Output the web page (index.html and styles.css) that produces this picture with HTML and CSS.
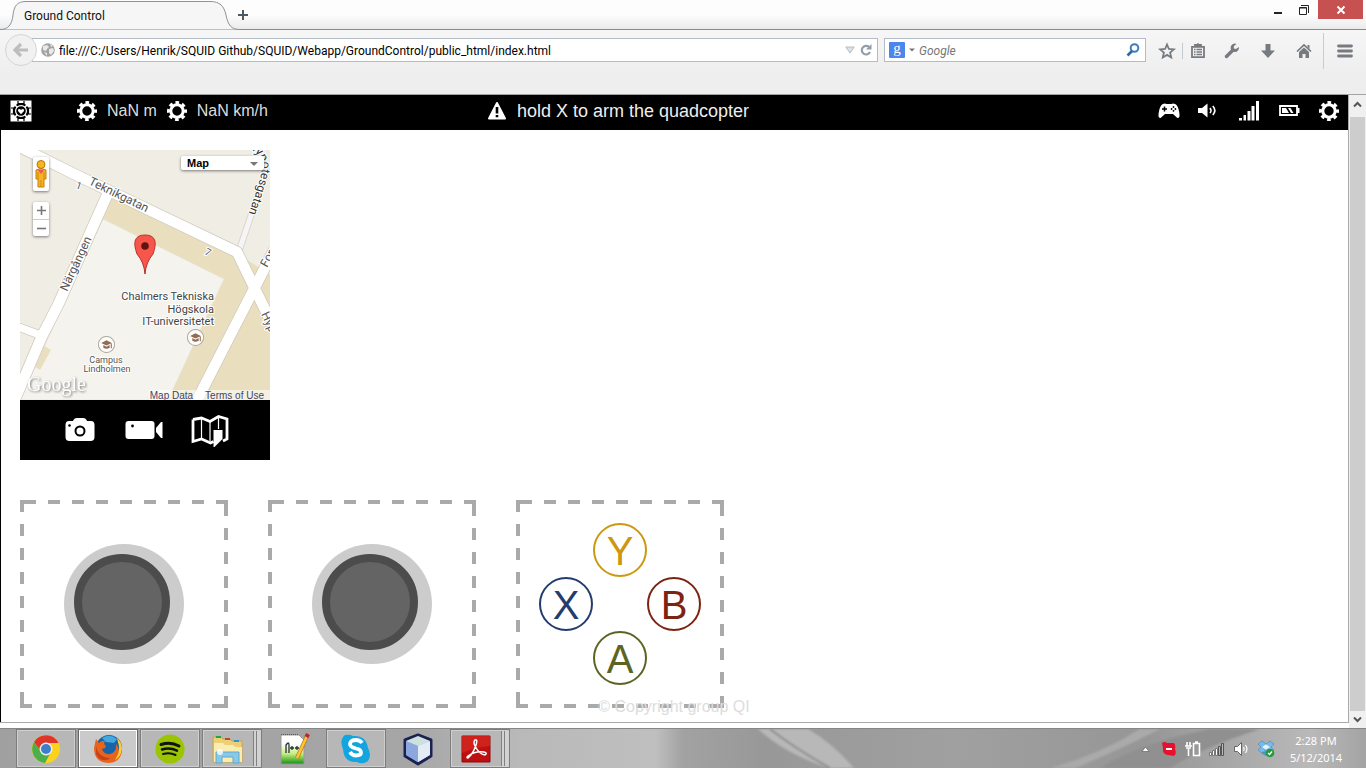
FILE: index.html
```html
<!DOCTYPE html>
<html lang="en">
<head>
<meta charset="utf-8">
<title>Ground Control</title>
<link rel="stylesheet" href="styles.css">
</head>
<body>
<svg class="sprite" aria-hidden="true">
  <symbol id="gear" viewBox="0 0 20 20">
    <circle cx="10" cy="10" r="6.2" fill="none" stroke="currentColor" stroke-width="3"/>
    <circle cx="10" cy="10" r="8.4" fill="none" stroke="currentColor" stroke-width="3.2" stroke-dasharray="3.6 2.997" stroke-dashoffset="1.8"/>
  </symbol>
  <symbol id="cap" viewBox="0 0 16 16">
    <circle cx="8" cy="8" r="7.6" fill="#fff" stroke="#b5aea5"/>
    <path d="M8 4 13 6.500 8 9 3 6.500zM5 8.500v2.500q3 2 6 0V8.500L8 10zM12 7h1v4.500h-1z" fill="#936d51"/>
  </symbol>
</svg>

<header class="titlebar">
  <div class="tab">
    <svg class="tab-shape" viewBox="0 0 240 30" aria-hidden="true">
      <path d="M0 29.500C8 29.500 12 25 13 15 14 6 17 1.500 26 1.500H210C220 1.500 224 6 226 15 228 25 231 29.500 240 29.500" fill="#f6f6f6" stroke="#8b949c"/>
    </svg>
    <span class="tab-title">Ground Control</span>
  </div>
  <button class="plain new-tab" aria-label="New tab"><svg width="10" height="10" viewBox="0 0 10 10"><path d="M5 0v10M0 5h10" stroke="#4a5a66" stroke-width="2"/></svg></button>
  <div class="window-buttons">
    <button class="plain win" aria-label="Minimize"><svg width="12" height="12" viewBox="0 0 12 12"><path d="M2 9h8" stroke="#222" stroke-width="2"/></svg></button>
    <button class="plain win" aria-label="Restore"><svg width="12" height="12" viewBox="0 0 12 12"><path d="M1.500 3.500h7v7h-7zM1.500 4h7M3 1.500h7.500V9" fill="none" stroke="#222"/></svg></button>
    <button class="plain win-close" aria-label="Close"><svg width="10" height="10" viewBox="0 0 10 10"><path d="M1.500 1.500 8.500 8.500M8.500 1.500 1.500 8.500" stroke="#fff" stroke-width="2"/></svg></button>
  </div>
</header>

<nav class="toolbar">
  <button class="plain back" aria-label="Back"><svg width="16" height="16" viewBox="0 0 16 16"><path d="M2 8h13M8 2 2 8l6 6" fill="none" stroke="#bdbdbd" stroke-width="3.200"/></svg></button>
  <div class="field url-field">
    <svg width="14" height="14" viewBox="0 0 14 14" aria-hidden="true"><circle cx="7" cy="7" r="6.800" fill="#a2a2a2"/><path d="M2 3 6 2l2 2-2 2-1 2-3-1zM8 6l4-1 1 3-3 4-2-2zM3 9l3 1v3zM9 1l3 2-2 1z" fill="#e9e9e9"/></svg>
    <input class="text" type="text" aria-label="Address" value="file:///C:/Users/Henrik/SQUID Github/SQUID/Webapp/GroundControl/public_html/index.html">
    <svg width="10" height="8" viewBox="0 0 10 8" aria-hidden="true"><path d="M.8 1h8.400L5 7z" fill="#dfe3e8" stroke="#b4bbc6"/></svg>
    <button class="plain" aria-label="Reload"><svg width="14" height="12" viewBox="0 0 14 12"><path d="M10 3A4.300 4.300 0 1 0 11 8" fill="none" stroke="#929dab" stroke-width="2.200"/><path d="M7 5.500h5.500V0z" fill="#929dab"/></svg></button>
  </div>
  <div class="field search-field">
    <span class="google-badge">g</span>
    <svg width="6" height="4" viewBox="0 0 6 4" aria-hidden="true"><path d="M0 .5h6L3 3.500z" fill="#777"/></svg>
    <input class="text search-text" type="text" aria-label="Search" placeholder="Google">
    <button class="plain" aria-label="Search"><svg width="14" height="14" viewBox="0 0 14 14"><circle cx="8.500" cy="5" r="3.800" fill="none" stroke="#3b80bd" stroke-width="2"/><path d="M6 8 1.500 12.500" stroke="#2d69a8" stroke-width="2.600"/></svg></button>
  </div>
  <div class="tools">
    <button class="plain tool star" aria-label="Bookmark"><svg width="16" height="16" viewBox="0 0 16 16"><path d="M8 1.500 9.900 6l4.900.4-3.700 3.200 1.100 4.800L8 11.900l-4.200 2.500 1.100-4.800L1.200 6.400 6.100 6z" fill="none" stroke="#777b80" stroke-width="1.800"/></svg></button>
    <button class="plain tool ruled" aria-label="Bookmarks list"><svg width="16" height="16" viewBox="0 0 16 16"><path d="M2 3.900h12v10.200H2zM5 3V2h6v1" fill="none" stroke="#777b80" stroke-width="1.800"/><path d="M4 6.500h1.500M6.500 6.500H12M4 9h1.500M6.500 9H12M4 11.500h1.500M6.500 11.500H12M8 0v3" stroke="#777b80" stroke-width="1.300"/></svg></button>
    <button class="plain tool" aria-label="Developer tools"><svg width="16" height="16" viewBox="0 0 16 16"><path d="M2.500 13.500 9 7" stroke="#777b80" stroke-width="3.400" stroke-linecap="round"/><path d="M12.500 1a4.200 4.200 0 1 0 2.400 3L12 6 9.800 5.500 10 3z" fill="#777b80"/></svg></button>
    <button class="plain tool downloads" aria-label="Downloads"><svg width="16" height="16" viewBox="0 0 16 16"><path d="M5.500 1h5v6.500H15L8 15 1 7.500h4.500z" fill="#777b80"/></svg></button>
    <button class="plain tool" aria-label="Home"><svg width="16" height="16" viewBox="0 0 16 16"><path d="M1 8.500 8 2l7 6.500" fill="none" stroke="#777b80" stroke-width="1.700"/><path d="M3 9 8 4.500 13 9v6H9.500v-4h-3v4H3zM11.500 2h2v4l-2-2z" fill="#777b80"/></svg></button>
    <button class="plain tool menu" aria-label="Menu"><svg width="16" height="14" viewBox="0 0 16 14"><path d="M1.500 2h13M1.500 7h13M1.500 12h13" stroke="#777b80" stroke-width="2.800" stroke-linecap="round"/></svg></button>
  </div>
</nav>

<div class="viewport">
  <main class="page">
    <header class="statusbar">
      <div class="readings">
        <svg class="logo" width="22" height="22" viewBox="0 0 22 22" role="img" aria-label="Logo">
          <path d="M.5.500h21v21H.5z" fill="#fff"/>
          <path d="M8 1v2.500h6V1M8 21v-2.500h6V21M1 8h2.500v6H1M21 8h-2.500v6H21" fill="none" stroke="#000" stroke-width="1.200"/>
          <circle cx="11" cy="11" r="7" fill="#fff" stroke="#000" stroke-width="2"/>
          <circle cx="11" cy="11" r="4.800" fill="#000"/>
          <path d="M5 5l2.500 2.500M17 5l-2.500 2.500M5 17l2.500-2.500M17 17l-2.500-2.500" stroke="#fff" stroke-width="1.600"/>
          <path d="M11 14.200 8 11Q7.600 8 11 9.700 14.400 8 14 11z" fill="#fff"/>
        </svg>
        <div class="reading-list">
          <svg class="icon"><use href="#gear"/></svg><span>NaN m</span>
          <svg class="icon"><use href="#gear"/></svg><span>NaN km/h</span>
        </div>
      </div>
      <div class="message">
        <svg width="18" height="18" viewBox="0 0 18 18" aria-hidden="true"><path d="M9 1 17 16.500H1z" fill="#fff" stroke="#fff" stroke-width="2" stroke-linejoin="round"/><path d="M9 5v6.500M9 13v2.300" stroke="#000" stroke-width="2.600"/></svg>
        <span>hold X to arm the quadcopter</span>
      </div>
      <div class="indicators">
        <svg class="icon" viewBox="0 0 20 20" role="img" aria-label="Gamepad"><path d="M4 3Q6 2 7.500 3h5Q14 2 16 3q2 .5 3.500 5 1.500 6 .8 8-1.500 1.800-3 0L14 13H6L2.700 16q-1.500 1.800-3 0Q-1 14 .5 8 2 3.500 4 3z" fill="#fff"/><path d="M5.500 5.500v5M3 8h5" stroke="#000" stroke-width="1.500"/><g fill="#000"><circle cx="14.500" cy="6" r=".9"/><circle cx="14.500" cy="9.800" r=".9"/><circle cx="12.600" cy="8" r=".9"/><circle cx="16.400" cy="8" r=".9"/></g></svg>
        <svg class="icon" viewBox="0 0 20 20" role="img" aria-label="Volume"><path d="M-1 7h4L8.500 2.500v14L3 12h-4z" fill="#fff"/><path d="M11 7q2 2.500 0 5M13.800 5q4 4.500 0 9" fill="none" stroke="#fff" stroke-width="1.600"/></svg>
        <svg class="icon" viewBox="0 0 20 20" role="img" aria-label="Signal"><path d="M0 17h3v2.500H0zM4.500 14h2.500v5.500H4.500zM8.500 10h3v9.500h-3zM12.500 5h3v14.500h-3zM17 0h3v19.500h-3z" fill="#fff"/></svg>
        <svg class="icon" viewBox="0 0 20 20" role="img" aria-label="Battery"><path d="M1 5h17v9H1z" fill="none" stroke="#fff" stroke-width="1.800"/><path d="M18 7h2.500v5H18z" fill="#fff"/><path d="M3 7h4l3 5H3zM9 7h2.500l3 5H12z" fill="#fff"/></svg>
        <svg class="icon" role="img" aria-label="Settings"><use href="#gear"/></svg>
      </div>
    </header>

    <section class="map-card">
      <div class="map">
        <svg class="map-art" viewBox="0 0 250 250" role="img" aria-label="Map">
          <path d="M0 0h250v250H0z" fill="#f0ede5"/>
          <path d="M88 44 217 103 250 125V250H5L70 90z" fill="#e9dfbf"/>
          <path d="M83 69 204 129 148 250H0L40 162z" fill="#f4f3ed" stroke="#e7e2d3" stroke-width=".6"/>
          <path d="M23 195 31 200 20 220 12 215z" fill="#e9dfbf"/>
          <g fill="none" stroke-linejoin="round">
            <path d="M249 12 219 101" stroke="#d9d6cf" stroke-width="7"/>
            <path d="M249 12 219 101" stroke="#f5f5f5" stroke-width="5"/>
            <g stroke="#cfcabb">
              <path d="M-4-5 52 23 217 102 254 178M254 100 174 256" stroke-width="12"/>
              <path d="M88 43 38 155 22 186-4 247" stroke-width="12"/><path d="M-4 176 20 185" stroke-width="9"/>
            </g>
            <g stroke="#fff">
              <path d="M-4-5 52 23 217 102 254 178M254 100 174 256" stroke-width="10.500"/>
              <path d="M88 43 38 155 22 186-4 247" stroke-width="10.500"/><path d="M-4 176 20 185" stroke-width="7.500"/>
            </g>
          </g>
          <path id="hyp" d="M227-2Q240 3 242 14 243 26 226 70" fill="none"/>
          <g class="street">
            <text transform="translate(68 34) rotate(26)">Teknikgatan</text>
            <text transform="translate(47 142) rotate(-65)">Närgången</text>
            <text class="street-dark"><textPath href="#hyp">Hypotesgatan</textPath></text>
            <text transform="translate(247 118) rotate(-62)">For</text>
            <text transform="translate(241 164) rotate(65)">Hyp</text>
            <text class="number" transform="translate(55 38) rotate(20)">1</text>
            <text class="number" transform="translate(184 104) rotate(26)">7</text>
          </g>
          <g class="place" text-anchor="end"><text x="194" y="150">Chalmers Tekniska</text><text x="194" y="163">Högskola</text><text x="194" y="175">IT-universitetet</text></g>
          <g class="campus" text-anchor="middle"><text x="86" y="213">Campus</text><text x="87" y="222">Lindholmen</text></g>
          <use href="#cap" x="78" y="186" width="17" height="17"/><use href="#cap" x="167" y="179" width="17" height="17"/>
          <path d="M125 124Q124 112 117 104 110 85 125 85 140 85 133 104 126 112 125 124z" fill="#f9564b" stroke="#b3332b"/>
          <circle cx="125" cy="96" r="3.800" fill="#5e1511"/>
          <path d="M129 240h121v10H129z" fill="#fff" opacity=".55"/>
          <text class="google" x="7" y="241">Google</text>
        </svg>
        <button class="map-control pegman" aria-label="Street view"><svg width="14" height="30" viewBox="0 0 14 30"><path d="M2 11q5-3 10 0v9h-2v8H4v-8H2z" fill="#f6b51e" stroke="#c57c12"/><circle cx="7" cy="5.500" r="4" fill="#f6b51e" stroke="#b77411"/><path d="M4 11h6l-3 4z" fill="#ef5261"/><path d="M7 21v7M4 13v7M10 13v7" stroke="#cf8914"/></svg></button>
        <div class="map-control zoom">
          <button class="plain zoom-button" aria-label="Zoom in"><svg width="9" height="9" viewBox="0 0 9 9"><path d="M4.500 0v9M0 4.500h9" stroke="#777" stroke-width="1.600"/></svg></button>
          <button class="plain zoom-button" aria-label="Zoom out"><svg width="9" height="9" viewBox="0 0 9 9"><path d="M0 4.500h9" stroke="#777" stroke-width="1.600"/></svg></button>
        </div>
        <div class="map-control map-type">
          <select class="map-select" aria-label="Map type"><option>Map</option></select>
          <svg class="caret" width="8" height="4" viewBox="0 0 8 4" aria-hidden="true"><path d="M0 0h8L4 4z" fill="#777"/></svg>
        </div>
        <div class="map-links"><a class="map-link" href="#data">Map Data</a><a class="map-link" href="#terms">Terms of Use</a></div>
      </div>
      <div class="map-actions">
        <button class="plain" aria-label="Photo"><svg width="30" height="26" viewBox="0 0 30 26"><path d="M4 4H8Q9 1 12 1h6q3 0 4 3h4q3.500 0 3.500 4v12q0 4-4 4H4.500q-4 0-4-4V8q0-4 3.500-4z" fill="#fff"/><circle cx="15" cy="14" r="4.500" fill="none" stroke="#000" stroke-width="2"/><circle cx="4.500" cy="8.500" r="1.300"/></svg></button>
        <button class="plain" aria-label="Video"><svg width="38" height="20" viewBox="0 0 38 20"><rect x=".5" y="1" width="29" height="18" rx="3" fill="#fff"/><path d="M31 8l5-6h1.500v16H36l-5-6z" fill="#fff"/><circle cx="7.500" cy="6" r="1.400"/></svg></button>
        <button class="plain" aria-label="Waypoints"><svg width="36" height="32" viewBox="0 0 36 32"><path d="M0 5.500 8.500 4 17 7.500 25.500 2.500 34 5v20L30 27M0 5.500v22L8.500 25l9 4 3-1.500" fill="none" stroke="#fff" stroke-width="2.800"/><path d="M8.500 4v21M17 7.500v20M25.500 3v12" stroke="#fff" stroke-width="1.200"/><path d="M20.500 16h9v9l-8 8h-1z" fill="#fff"/></svg></button>
      </div>
    </section>

    <section class="pads">
      <div class="pad"><div class="stick-base"><div class="stick"></div></div></div>
      <div class="pad"><div class="stick-base"><div class="stick"></div></div></div>
      <div class="pad">
        <div class="button-grid">
          <button class="pad-button pad-y">Y</button>
          <button class="pad-button pad-x">X</button>
          <button class="pad-button pad-b">B</button>
          <button class="pad-button pad-a">A</button>
        </div>
      </div>
    </section>
    <footer class="copyright">© Copyright group QI</footer>
  </main>
  <div class="scrollbar">
    <button class="plain scroll-up" aria-label="Scroll up"><svg width="9" height="7" viewBox="0 0 9 7"><path d="M1 5.500 4.500 2 8 5.500" fill="none" stroke="#555" stroke-width="2"/></svg></button>
    <div class="scroll-thumb"></div>
    <button class="plain scroll-down" aria-label="Scroll down"><svg width="9" height="7" viewBox="0 0 9 7"><path d="M1 1.500 4.500 5 8 1.500" fill="none" stroke="#555" stroke-width="2"/></svg></button>
  </div>
</div>

<footer class="taskbar">
  <svg class="wallpaper" viewBox="0 0 1366 40" preserveAspectRatio="none" aria-hidden="true">
    <defs>
      <linearGradient id="wall"><stop offset="0" stop-color="#a0a0a0"/><stop offset=".3" stop-color="#a6a6a6"/><stop offset=".38" stop-color="#b9b9b9"/><stop offset=".48" stop-color="#bfbfbf"/><stop offset=".5" stop-color="#a2a2a2"/><stop offset=".56" stop-color="#989898"/><stop offset=".7" stop-color="#a0a0a0"/><stop offset=".84" stop-color="#969696"/><stop offset=".92" stop-color="#adadad"/><stop offset=".96" stop-color="#b9b9b9"/><stop offset="1" stop-color="#a3a3a3"/></linearGradient>
      <filter id="soft"><feGaussianBlur stdDeviation="1"/></filter>
    </defs>
    <path d="M0 0h1366v40H0z" fill="url(#wall)"/>
    <g filter="url(#soft)"><path d="M758 0h50q25 15 46 40h-26Q785 25 758 0z" fill="#b8b8b8"/><path d="M770 0q25 20 60 40" fill="none" stroke="#8c8c8c" stroke-width="2"/><path d="M1140 0Q1100 26 1050 40h26q50-22 84-40z" fill="#aaa"/><path d="M1100 40q40-26 110-40h50q-60 20-90 40z" fill="#909090"/></g>
  </svg>
  <div class="tasks">
    <button class="task framed" aria-label="Chrome"><svg width="30" height="30" viewBox="0 0 30 30"><circle cx="15" cy="15" r="14" fill="#fcd21c"/><path d="M3 8a14 14 0 0 1 24.500 1H15a6 6 0 0 0-5.500 8z" fill="#e0352b"/><path d="M3 8A14 14 0 0 0 14 29l6-11a6 6 0 0 1-10 0z" fill="#4cae4c"/><circle cx="15" cy="15" r="6.500" fill="#eee"/><circle cx="15" cy="15" r="5" fill="#3f7fca"/></svg></button>
    <button class="task framed current" aria-label="Firefox"><svg width="30" height="30" viewBox="0 0 30 30"><circle cx="16" cy="14" r="13" fill="#1765a8"/><path d="M9 4q8-5 15 1l-3 4-8-1z" fill="#45a7df"/><path d="M23 3q7 6 6 14-2 12-14 12Q1 28 1 14L3 5l3 4q3-3 6-2-2 3 1 5l-1 2-3 1q2 6 8 5 7-2 6-10 3 3 3 7 2-8-3-14z" fill="#e8641b"/><path d="M24 4q7 7 4 15-2 5-6 7 5-8 4-14z" fill="#ffd036"/><path d="M3 12q2 12 15 12-10 6-15-4z" fill="#c6411c"/></svg></button>
    <button class="task framed" aria-label="Spotify"><svg width="30" height="30" viewBox="0 0 30 30"><circle cx="15" cy="15" r="14.600" fill="#9bc500"/><g fill="none" stroke="#111" stroke-linecap="round"><path d="M6 10.500q10-3 18 1.500" stroke-width="3"/><path d="M7 15.500q8-2.500 15 1.200" stroke-width="2.500"/><path d="M8 20q7-2 12.500 1" stroke-width="2"/></g></svg></button>
    <button class="task framed stacked" aria-label="File Explorer"><svg width="32" height="30" viewBox="0 0 32 30"><path d="M1 3h8l2 2h7l2 2h10v21H1z" fill="#edcf76" stroke="#c9a248"/><path d="M2 9h9l2 2h8l2 2h7v15H2z" fill="#faedb2"/><path d="M4 2h5v2H4z" fill="#25a246"/><path d="M13 4h5v2h-5z" fill="#c94433"/><path d="M22 6h5v2h-5z" fill="#2f94d8"/><path d="M4 29V18h23v11h-6v-6H10v6z" fill="#87c9e8" stroke="#63a8cc"/><circle cx="8" cy="18" r="3" fill="#fff" opacity=".8"/></svg></button>
    <button class="task" aria-label="Notepad++"><svg width="32" height="32" viewBox="0 0 32 32"><defs><linearGradient id="leaf" x2="0" y2="1"><stop offset=".3" stop-color="#fff"/><stop offset=".65" stop-color="#c5ee80"/><stop offset="1" stop-color="#168e13"/></linearGradient></defs><path d="M3 2h18l5 5v24H3z" fill="url(#leaf)" stroke="#999"/><path d="M3 1.500h18" stroke="#555" stroke-dasharray="1 1"/><path d="M8 20v-8q3-4 3 0v8M12 15h4M14 13v4M17 15h4M19 13v4" fill="none" stroke="#263238" stroke-width="1.300"/><path d="M19 25 29 3" stroke="#b87a12" stroke-width="4"/><path d="M19 25 29 3" stroke="#ffc43c" stroke-width="2.500"/><path d="M28.500 4 30 1" stroke="#b23" stroke-width="4"/></svg></button>
    <button class="task framed" aria-label="Skype"><svg width="30" height="30" viewBox="0 0 30 30"><path d="M4 1q5-1 8 1 13-1 15 12 4 7 0 13-5 4-11 1Q3 29 2 15-2 6 4 1z" fill="#12a5df"/><path d="M21 9q-2-3-6-3-6 0-6 4 0 3 6 4.500 5 1 5 4 0 3-5 3-4 0-6-3.500" fill="none" stroke="#fff" stroke-width="3.800"/></svg></button>
    <button class="task" aria-label="NetBeans"><svg width="32" height="32" viewBox="0 0 32 32"><path d="M16 2 29 7v16l-13 8L3 23V7z" fill="#9fb9e3" stroke="#1b2252" stroke-width="3" stroke-linejoin="round"/><path d="M16 3 28 8l-12 5L4 8z" fill="#cde1dd"/><path d="M16 13 28 8v14l-12 7z" fill="#e3ecf5"/><path d="M4 8l12 5v16L4 22z" fill="#8ca8df"/></svg></button>
    <button class="task framed stacked" aria-label="Adobe Reader"><svg width="30" height="28" viewBox="0 0 30 28"><path d="M1 1h28v26H1z" fill="#be1010" stroke="#8d0b0b"/><path d="M1 1h28v10Q15 12 1 18z" fill="#d92a22" opacity=".7"/><path d="M14 5q3-1 1 5-3 9-8 13-2 0 0-2 7-5 16-4 4 1 1 3-6-1-10-9-2-4 0-6z" fill="none" stroke="#fff" stroke-width="1.500"/></svg></button>
  </div>
  <div class="tray">
    <svg class="tray-arrow" width="9" height="6" viewBox="0 0 9 6" aria-hidden="true"><path d="M1 5.500 4.500 1 8 5.500z" fill="#fff" stroke="#666" stroke-width=".7"/></svg>
    <svg width="16" height="16" viewBox="0 0 16 16" aria-hidden="true"><path d="M1 2q3-2 5 0h7q2 2 1 6 2 5-1 7l-6-1Q1 13 2 7z" fill="#e8112d"/><path d="M5 8h6" stroke="#fff" stroke-width="2"/></svg>
    <svg width="16" height="16" viewBox="0 0 16 16" aria-hidden="true"><path d="M8.500 2.500h6v12h-6zM10 1h3" fill="#999" stroke="#fff" stroke-width="1.600"/><path d="M2 1v4M5 1v4M0 5h7M1 7h5M3.500 8v7" stroke="#fff" stroke-width="1.600"/></svg>
    <svg width="16" height="16" viewBox="0 0 16 16" aria-hidden="true"><path d="M.5 11.500h2v3h-2zM3.500 9.500h2v5h-2zM6.500 7.500h2v7h-2z" fill="#fff" stroke="#777"/><path d="M9.500 5.500h2v9h-2zM12.500 2.500h2v12h-2z" fill="#bbb" stroke="#555"/></svg>
    <svg width="16" height="16" viewBox="0 0 16 16" aria-hidden="true"><path d="M1.500 5.500h3l4-4v13l-4-4h-3z" fill="#fff" stroke="#666"/><path d="M10.500 6q1.500 2 0 4M12.500 4q3 4 0 8" fill="none" stroke="#fff" stroke-width="1.200"/></svg>
    <svg width="18" height="18" viewBox="0 0 18 18" aria-hidden="true"><path d="M5 1 9 4l4-3 4 3-3 3 3 3-4 3-4-3-4 3-4-3 3-3-3-3z" fill="#77b9ea" stroke="#3d87c4" stroke-width=".6"/><path d="M9 4.500 13 7 9 9.500 5 7z" fill="#e6f4fd"/><path d="M4 13l5 3 4-3-4-2z" fill="#4b93cd"/><circle cx="13" cy="13" r="4.300" fill="#259b3d"/><path d="M11 13l1.500 1.500 2.500-3" fill="none" stroke="#fff" stroke-width="1.300"/></svg>
    <div class="clock"><span>2:28 PM</span><span>5/12/2014</span></div>
  </div>
</footer>
</body>
</html>
```

FILE: styles.css
```css
* { box-sizing: border-box; }

body {
  margin: 0;
  height: 100vh;
  display: flex;
  flex-direction: column;
  overflow: hidden;
  background: #fff;
  font-family: "Liberation Sans", Arial, sans-serif;
}

svg { display: block; flex: none; overflow: visible; }
.sprite { position: absolute; width: 0; height: 0; }

.plain {
  display: grid;
  place-items: center;
  padding: 0;
  border: 0;
  background: none;
}

/* Browser frame */
.titlebar {
  display: flex;
  align-items: center;
  height: 30px;
  flex: none;
  background: linear-gradient(#fdfdfd 50%, #ebebeb);
  border-bottom: 1px solid #7f8c94;
}
.tab { position: relative; width: 237px; height: 30px; }
.tab-shape { position: absolute; inset: 0; width: 240px; height: 30px; }
.tab-title {
  position: relative;
  display: block;
  padding-left: 24px;
  font: 12px/32px Roboto, sans-serif;
  color: #111;
}
.new-tab { width: 12px; height: 28px; }
.window-buttons { display: flex; align-self: flex-start; margin-left: auto; padding-right: 3px; }
.win { width: 26px; height: 19px; }
.win-close { width: 45px; height: 19px; margin-left: 1px; background: #c75050; }

.toolbar {
  display: flex;
  align-items: flex-start;
  height: 65px;
  flex: none;
  padding: 4px 0 0 5px;
  background: linear-gradient(#f6f6f6, #eee 70%);
  border-bottom: 1px solid #a3a3a3;
}
.back {
  position: relative;
  width: 32px;
  height: 32px;
  border: 1px solid #d5d5d5;
  border-radius: 50%;
  background: #f1f1f1;
}
.field {
  display: flex;
  align-items: center;
  height: 24px;
  margin-top: 4px;
  border: 1px solid #b3bbc5;
  background: #fff;
}
.url-field { flex: 1; gap: 4px; margin-left: -5px; padding: 0 4px 0 8px; }
.search-field { width: 262px; gap: 4px; margin-left: 6px; padding: 0 5px 0 4px; }
.text {
  flex: 1;
  min-width: 0;
  padding: 2px 0 0;
  border: 0;
  outline: 0;
  background: none;
  color: #000;
  font: 12px/20px Roboto, sans-serif;
}
.search-text { font-style: italic; }
.search-text::placeholder { color: #777; }
.google-badge {
  width: 16px;
  height: 16px;
  border-radius: 1px;
  background: #4a86ec;
  color: #fff;
  font: 15px/12px "Liberation Serif", serif;
  text-align: center;
}
.tools { display: flex; align-items: center; height: 34px; margin-left: 5px; }
.tool { width: 38px; height: 16px; }
.star { width: 32px; }
.ruled { width: 31px; margin-left: -1px; border-left: 1px solid #c2cad3; }
.downloads { width: 34px; }
.menu { width: 43px; height: 36px; border-left: 1px solid #c6ccd3; }

/* Page area */
.viewport { display: flex; flex: 1; min-height: 0; }
.page {
  position: relative;
  flex: 1;
  margin-bottom: 5px;
  border: solid #aaa;
  border-width: 0 1px 1px 0;
  box-shadow: inset 1px 0 #000;
}
.statusbar {
  display: grid;
  grid-template-columns: 1fr auto 1fr;
  align-items: center;
  height: 35px;
  padding: 0 9px 4px 10px;
  background: #000;
  color: #ddd;
}
.readings, .reading-list, .message, .indicators { display: flex; align-items: center; }
.readings { gap: 45px; font-size: 16px; }
.reading-list { gap: 10px; }
.icon { width: 20px; height: 20px; color: #fff; }
.message { gap: 11px; padding: 1px 112px 0 0; font-size: 18px; color: #eee; }
.indicators { justify-content: flex-end; gap: 20px; }

.map-card { width: 250px; margin: 20px 0 0 20px; }
.map { position: relative; height: 250px; overflow: hidden; }
.map-art { width: 250px; height: 250px; overflow: hidden; }
.street, .place, .campus { font-family: Roboto, sans-serif; paint-order: stroke; stroke: #fff; stroke-width: 2px; }
.street { font-size: 12px; fill: #555; }
.street-dark { fill: #333; }
.number { font-size: 10px; }
.place { font-size: 11px; fill: #444; }
.campus { font-size: 9px; fill: #555; }
.google {
  font: 20px "Liberation Serif", serif;
  fill: #fff;
  filter: drop-shadow(1px 1px 1px #777);
}
.map-control {
  position: absolute;
  border: 0;
  border-radius: 2px;
  background: #fff;
  box-shadow: 0 1px 3px #777;
}
.pegman { top: 7px; left: 13px; width: 16px; height: 34px; padding: 1px; }
.zoom { top: 52px; left: 13px; width: 16px; }
.zoom-button { width: 16px; height: 17px; }
.zoom-button + .zoom-button { border-top: 1px solid #ccc; }
.map-type { top: 6px; right: 6px; width: 83px; height: 14px; }
.map-select {
  display: block;
  width: 100%;
  height: 14px;
  padding: 0 6px;
  border: 0;
  background: none;
  appearance: none;
  color: #000;
  font: bold 11px/14px "Liberation Sans", Arial, sans-serif;
}
.caret { position: absolute; top: 6px; right: 6px; }
.map-links { position: absolute; right: 6px; bottom: -2px; display: flex; gap: 12px; }
.map-link { color: #446; font: 10px/13px "Liberation Sans", Arial, sans-serif; text-decoration: none; }
.map-actions {
  display: flex;
  align-items: center;
  gap: 30px;
  height: 60px;
  padding: 0 0 0 45px;
  background: #000;
}
.map-actions .plain { height: 32px; }

.pads { display: flex; gap: 40px; margin: 40px 0 0 20px; }
.pad {
  display: grid;
  place-items: center;
  width: 208px;
  height: 208px;
  background:
    repeating-linear-gradient(90deg, #aaa 0 12px, transparent 12px 24px) right top / calc(100% - 4px) 4px no-repeat,
    repeating-linear-gradient(180deg, #aaa 0 12px, transparent 12px 24px) right bottom / 4px calc(100% - 4px) no-repeat,
    repeating-linear-gradient(90deg, #aaa 0 12px, transparent 12px 24px) left bottom / calc(100% - 4px) 4px no-repeat,
    repeating-linear-gradient(180deg, #aaa 0 12px, transparent 12px 24px) left top / 4px calc(100% - 4px) no-repeat;
}
.stick-base { width: 120px; height: 120px; padding: 10px; border-radius: 50%; background: #ccc; }
.stick { width: 96px; height: 96px; border: 8px solid #4c4c4c; border-radius: 50%; background: #646464; }
.button-grid {
  display: grid;
  grid-template: repeat(3, 54px) / repeat(3, 54px);
  grid-template-areas: ". y ." "x . b" ". a .";
}
.pad-button {
  padding: 2px 0 0;
  border: 2px solid;
  border-radius: 50%;
  background: none;
  font: 40px/48px "Liberation Sans", Arial, sans-serif;
}
.pad-y { grid-area: y; color: #cc980f; }
.pad-x { grid-area: x; color: #233c70; }
.pad-b { grid-area: b; color: #7d2311; }
.pad-a { grid-area: a; color: #5c6423; }

.copyright {
  position: absolute;
  bottom: 5px;
  left: 0;
  right: 0;
  color: #ddd;
  font-size: 16px;
  line-height: 20px;
  text-align: center;
}

.scrollbar { display: flex; flex-direction: column; width: 17px; background: #f0f0f0; }
.scroll-up { width: 17px; height: 22px; padding-bottom: 4px; }
.scroll-thumb { flex: 1; margin: 0 1px; background: #cdcdcd; }
.scroll-down { width: 17px; height: 17px; }

/* Taskbar */
.taskbar {
  position: relative;
  display: flex;
  justify-content: space-between;
  height: 40px;
  flex: none;
  padding-left: 16px;
  border-top: 1px solid #868686;
  background: #a0a0a0;
}
.wallpaper { position: absolute; inset: 0; width: 100%; height: 100%; overflow: hidden; }
.tasks, .tray { position: relative; display: flex; align-items: center; }
.tasks { gap: 2px; }
.task {
  display: grid;
  place-items: center;
  width: 60px;
  height: 39px;
  padding: 0;
  border: 1px solid transparent;
  background: none;
}
.framed { border-color: #7d7d7d; background: #b7b7b7; box-shadow: inset 0 0 0 1px #cfcfcf; }
.current { border-color: #666; background: #cacaca; box-shadow: inset 0 0 0 1px #fff; }
.stacked {
  padding-right: 8px;
  background: linear-gradient(90deg, transparent calc(100% - 8px), #808080 0 calc(100% - 7px), #d2d2d2 0 calc(100% - 5px), #808080 0 calc(100% - 4px), #d2d2d2 0) #b7b7b7;
}
.tray { gap: 8px; }
.tray-arrow { margin-right: 3px; }
.clock {
  display: flex;
  flex-direction: column;
  width: 83px;
  padding-right: 17px;
  color: #fff;
  font: 11px/17px "Noto Sans", sans-serif;
  text-align: center;
}
```
